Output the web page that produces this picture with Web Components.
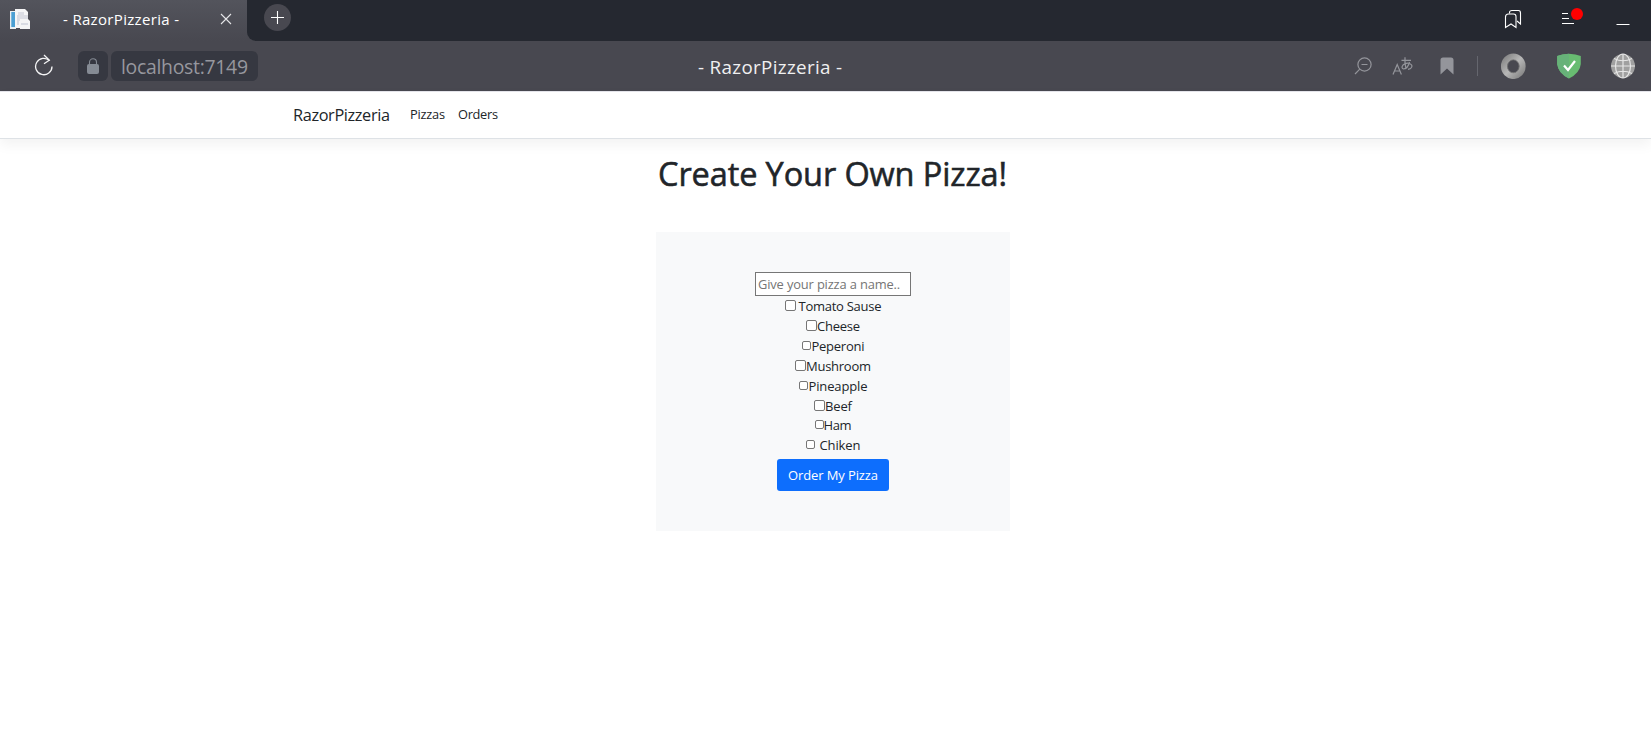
<!DOCTYPE html>
<html lang="en">
<head>
<meta charset="utf-8">
<title>- RazorPizzeria -</title>
<style>
html,body{margin:0;height:100%;background:#fff;overflow:hidden}
body{font-family:"Open Sans","Noto Sans",sans-serif;color:#212529;font-size:13px}
</style>
</head>
<body>
<browser-window>
  <tab-strip slot="tabs"></tab-strip>
  <tool-bar slot="tools"></tool-bar>
  <pizza-page></pizza-page>
</browser-window>
<script>
const define=(name,html,after)=>{
  const t=document.createElement('template');t.innerHTML=html;
  customElements.define(name,class extends HTMLElement{
    constructor(){super();this.attachShadow({mode:'open'}).append(t.content.cloneNode(true));}
    connectedCallback(){if(after)after(this);}
  });
};

/* Single-line label whose tracking is adjusted so it fills the width in "w". */
define('fit-text',`<style>:host{display:inline-block;white-space:pre;flex:none}span{display:inline-block}</style><span><slot></slot></span>`,el=>{
  const w=+el.getAttribute('w'),s=el.shadowRoot.querySelector('span');
  el.style.width=w+'px';
  s.style.letterSpacing='0px';
  const n=el.textContent.length;
  s.style.letterSpacing=((w-s.getBoundingClientRect().width)/(n-1)).toFixed(3)+'px';
});

define('browser-window',`<style>:host{display:flex;flex-direction:column;height:746px;width:1651px}</style>
<slot name="tabs"></slot><slot name="tools"></slot><slot></slot>`);

define('tab-strip',`<style>
:host{display:flex;height:41px;background:#484850;color:#fff}
.tab{width:247px;background:linear-gradient(#53545c,#484850);display:flex;align-items:center;box-sizing:border-box;padding-left:9px;height:41px}
.tab fit-text{font-size:15px;line-height:20px;margin:-4px 0 0 32px}
.fav{margin-top:-3px}
.x{margin:-4px 0 0 41px}
.rest{flex:1;background:#252830;border-bottom-left-radius:9px;display:flex;align-items:flex-start;box-sizing:border-box;padding:4px 21px 0 17px}
.sp{flex:1}
svg{display:block;flex:none}
</style>
<div class="tab">
<svg class="fav" width="22" height="21" viewBox="0 0 22 21"><path d="M1 2h6v18H1z" fill="#e9eef1"/><path d="M2.3 3h3.7v15H2.3z" fill="#4b9fd3"/><path d="M6 0h10l3 3v16H6z" fill="#f5f5f6"/><path d="M9 3h6v3h4v6H9z" fill="#dcdde4"/><path d="M11 10h8l2 2v8H11z" fill="#f4f4f5"/><path d="M12 14h7v2h-7zM8 6h2v10H8z" fill="#d9dbe3"/></svg>
<fit-text w="116">- RazorPizzeria -</fit-text>
<svg class="x" width="12" height="12" viewBox="0 0 12 12"><path d="M1 1l10 10M11 1L1 11" stroke="#e6e6e8" stroke-width="1.1"/></svg>
</div>
<div class="rest">
<svg width="27" height="27" viewBox="0 0 27 27"><circle cx="13.5" cy="13.5" r="13.5" fill="#484850"/><path d="M13.5 7v13M7 13.5h13" stroke="#fff" stroke-width="1.1"/></svg>
<div class="sp"></div>
<svg width="18" height="20" viewBox="0 0 18 20" style="margin:5px 39px 0 0" fill="none" stroke="#fff" stroke-width="1.1"><path d="M1.5 18.5V8Q1.5 5 4.5 5H9.500Q12 5 12 7.500V18.500L7 15Z"/><path d="M5.500 4.500V3.500Q5.500 1.500 8 1.500H14.500Q16.500 1.500 16.500 4V15L13 12"/></svg>
<svg width="23" height="20" viewBox="0 0 23 20" style="margin:4px 32px 0 0"><path d="M1 5.500h6M1 10.500h7M1 15.500h12" stroke="#fff" stroke-width="1.1"/><circle cx="16" cy="6" r="6" fill="red"/></svg>
<svg width="14" height="21" viewBox="0 0 14 21"><path d="M.5 20.500h13" stroke="#fff" stroke-width="1"/></svg>
</div>`);

define('tool-bar',`<style>
:host{display:grid;grid-template-columns:1fr auto 1fr;height:50px;background:#484850;box-sizing:border-box;align-items:center;flex:none}
.l,.r{display:flex;align-items:center}.r{justify-content:flex-end;padding-right:15px}
.l{padding-left:34px}
.lock,.url{height:30px;border-radius:6px;background:#363841;display:flex;align-items:center;justify-content:center}
.lock{width:30px;margin-left:23px}
.url{width:147px;margin-left:3px;color:#96979e}
.url fit-text{font-size:19.4px;line-height:28px;margin-top:2px}
.title{color:#f0f0f1;margin-left:-111px}
.title fit-text{font-size:18.8px;line-height:28px;margin-top:2px}
svg{display:block;flex:none}
.sep{width:1px;height:20px;background:#65666e;margin-right:22px}
</style>
<div class="l">
<svg width="21" height="24" viewBox="0 0 21 24" fill="none" stroke="#f4f4f5" stroke-width="1.3"><path d="M18 12.500A8.200 8.200 0 1 1 15.500 6.600"/><path d="M10 1L15.300 6.200L10 9.800" /></svg>
<div class="lock"><svg width="14" height="18" viewBox="0 0 14 18"><path d="M3.500 8V5.300a3.500 3.500 0 0 1 7 0V8" fill="none" stroke="#858b94" stroke-width="1.1"/><rect x="1" y="7" width="12" height="10" rx="2" fill="#858b94"/></svg></div>
<div class="url"><fit-text w="127">localhost:7149</fit-text></div>
</div>
<div class="title"><fit-text w="144">- RazorPizzeria -</fit-text></div>
<div class="r">
<svg width="18" height="18" viewBox="0 0 18 18" style="margin:-1px 20px 0 0" fill="none" stroke="#94959b" stroke-width="1.2"><circle cx="10.500" cy="7.500" r="6.600"/><path d="M5.800 12.200L1 17M7.500 7.500h6"/></svg>
<svg width="21" height="18" viewBox="0 0 21 18" style="margin:-1px 27px 0 0" fill="none" stroke="#94959b" stroke-width="1.2"><path d="M1 17.500L5.200 7.500L9.400 17.500M2.500 14h5.400"/><path d="M9.500 3.300h9.500M13 .3Q12.500 6 14 12M17.500 5Q16 11.500 11.500 12Q8.800 11 11 8Q14 5.500 17.500 6.500Q21 8 19.500 10.500Q18.500 12 16 12.300"/></svg>
<svg width="14" height="18" viewBox="0 0 14 18" style="margin:-1px 23px 0 0"><path d="M.5 17.500V3Q.5 .5 3 .5H11Q13.500 .5 13.500 3V17.500L7 11.500Z" fill="#94959b"/></svg>
<div class="sep"></div>
<svg width="26" height="26" viewBox="0 0 26 26" style="margin-right:30px"><defs><linearGradient id="g" x2="1" y2="1"><stop stop-color="#868686"/><stop offset=".5" stop-color="#b7b7b7"/><stop offset="1" stop-color="#858585"/></linearGradient></defs><ellipse cx="13.300" cy="13.300" rx="9.200" ry="9.600" fill="none" stroke="url(#g)" stroke-width="6.300"/><ellipse cx="13.300" cy="13.300" rx="5.800" ry="6.500" fill="none" stroke="#777" stroke-width=".8"/></svg>
<svg width="26" height="26" viewBox="0 0 26 26" style="margin-right:28px"><path d="M13 .8Q20 1 24.800 3V11Q24 20 13 25.500Q2 20 1.200 11V3Q6 1 13 .8Z" fill="#68bc71"/><path d="M13 .8Q6 1 1.200 3V11Q2 20 13 25.500Z" fill="#67b279"/><path d="M8 12.500L12 17L19 8" fill="none" stroke="#fff" stroke-width="2.200"/></svg>
<svg width="26" height="26" viewBox="0 0 26 26" fill="none" stroke="#e6e6e6" stroke-width="1.200"><circle cx="13" cy="13" r="12" fill="#a0a0a0" stroke="none"/><ellipse cx="13" cy="13" rx="7.500" ry="12"/><path d="M13 1v24M1 13h24M4 5.500Q13 10 22 5.500M4 20.500Q13 16 22 20.500"/></svg>
</div>`);

define('site-nav',`<style>
:host{display:flex;height:48px;box-sizing:border-box;border-top:1px solid #e4e4ea;border-bottom:1px solid #dee2e6;box-shadow:0 6px 12px rgba(0,0,0,.05);padding-left:293px;align-items:center;flex:none;background:#fff}
.b{font-size:16.3px;line-height:24px;margin-right:20px}
.n{font-size:12.8px;line-height:20px;margin:-2px 13px 0 0}
</style>
<fit-text class="b" w="97">RazorPizzeria</fit-text><fit-text class="n" w="35">Pizzas</fit-text><fit-text class="n" w="40">Orders</fit-text>`);

define('topping-row',`<style>
:host{display:flex;height:20px;justify-content:center;align-items:center}
input{appearance:none;margin:0;box-sizing:border-box;width:var(--s,11px);height:var(--s,11px);border:1px solid #767676;border-radius:2px;background:#fff;margin-right:var(--g,0px);flex:none;position:relative;top:-.5px}
::slotted(fit-text){line-height:20px}
</style><input type="checkbox"><slot></slot>`);

define('pizza-page',`<style>
:host{display:flex;flex-direction:column;flex:1}
h1{margin:13px 0 0 14px;text-align:center;font-size:32.500px;font-weight:500;line-height:44px;height:44px;-webkit-text-stroke:.55px #212529}
.card{width:354px;height:299px;box-sizing:border-box;padding-top:40px;margin:36px auto 0;background:#f8f9fa;position:relative;left:7.500px;font-size:13px;display:flex;flex-direction:column}
.name{box-sizing:border-box;width:156px;height:24px;align-self:center;border:1px solid #767676;background:#fff;font:12.900px/20px "Open Sans",sans-serif;padding:0 2px;margin:0;border-radius:0;letter-spacing:-.15px;flex:none}
.name::placeholder{color:#757575;opacity:1}
button{align-self:center;margin-top:4px;width:112px;height:32px;border:0;padding:0;border-radius:3px;background:#0d6efd;color:#fff;font:13px/20px "Open Sans",sans-serif;flex:none}
</style>
<site-nav></site-nav>
<h1><fit-text w="349">Create Your Own Pizza!</fit-text></h1>
<form class="card">
<input class="name" placeholder="Give your pizza a name..">
<topping-row style="--g:3px"><fit-text w="83">Tomato Sause</fit-text></topping-row>
<topping-row><fit-text w="43">Cheese</fit-text></topping-row>
<topping-row style="--s:9px;--g:1px"><fit-text w="53">Peperoni</fit-text></topping-row>
<topping-row><fit-text w="65">Mushroom</fit-text></topping-row>
<topping-row style="--s:9px;--g:1px"><fit-text w="59">Pineapple</fit-text></topping-row>
<topping-row style="height:19px"><fit-text w="27">Beef</fit-text></topping-row>
<topping-row style="--s:9px"><fit-text w="28">Ham</fit-text></topping-row>
<topping-row style="--s:9px;--g:5px"><fit-text w="41">Chiken</fit-text></topping-row>
<button type="button"><fit-text w="90">Order My Pizza</fit-text></button>
</form>`);
</script>
</body>
</html>
